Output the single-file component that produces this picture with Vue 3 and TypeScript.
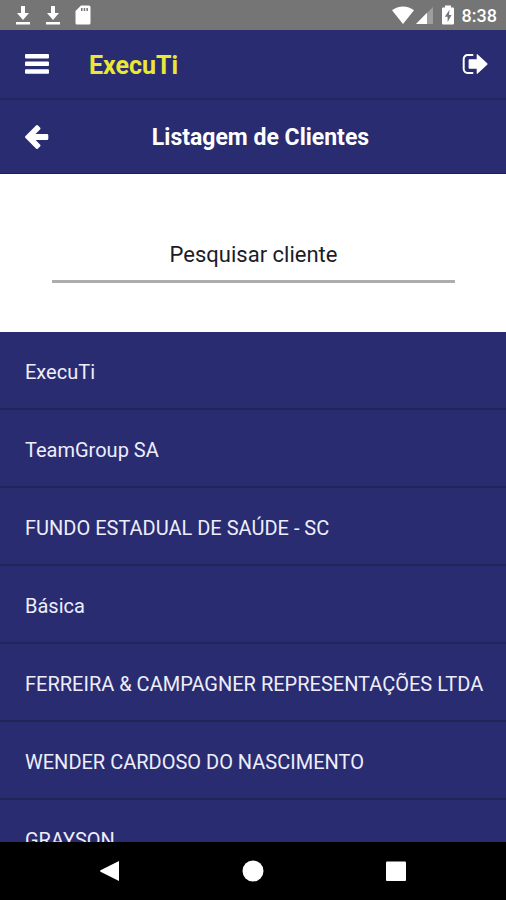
<script setup lang="ts">
import { computed, ref } from 'vue'

interface Client {
  id: number
  name: string
}

const clients: Client[] = [
  { id: 1, name: 'ExecuTi' },
  { id: 2, name: 'TeamGroup SA' },
  { id: 3, name: 'FUNDO ESTADUAL DE SAÚDE - SC' },
  { id: 4, name: 'Básica' },
  { id: 5, name: 'FERREIRA & CAMPAGNER REPRESENTAÇÕES LTDA' },
  { id: 6, name: 'WENDER CARDOSO DO NASCIMENTO' },
  { id: 7, name: 'GRAYSON' },
]

const query = ref('')

const visibleClients = computed<Client[]>(() => {
  const term = query.value.trim().toLowerCase()
  return clients.filter((client) => client.name.toLowerCase().includes(term))
})
</script>

<template>
  <div class="screen">
    <div class="status-bar">
      <div class="status-group notices">
        <svg v-for="n in 2" :key="n" class="download" viewBox="0 0 16 20" aria-hidden="true">
          <path d="M6 1h4v7h4l-6 7-6-7h4zM1 17h14v2.500H1z" />
        </svg>
        <svg class="card" viewBox="0 0 16 20" aria-hidden="true">
          <path d="M6 0.500h8a1.500 1.500 0 0 1 1.500 1.500v16a1.500 1.500 0 0 1-1.500 1.500H2A1.500 1.500 0 0 1 .5 18V6z" />
          <path class="slots" d="M6 3h1.500v3H6zM8.700 3h1.500v3H8.700zM11.400 3h1.500v3h-1.500z" />
        </svg>
      </div>
      <div class="status-group system">
        <svg class="wifi" viewBox="0 0 24 20" aria-hidden="true">
          <path d="M12 19 1 5.200C7 .1 17 .1 23 5.200z" />
        </svg>
        <svg class="signal" viewBox="0 0 18 20" aria-hidden="true">
          <path class="faint" d="M18 2v17H1z" />
          <path d="M12 7.700V19H1z" />
        </svg>
        <svg class="battery" viewBox="0 0 12 20" aria-hidden="true">
          <path d="M3 .5h6V2.500h2a1 1 0 0 1 1 1v15a1 1 0 0 1-1 1H1a1 1 0 0 1-1-1v-15a1 1 0 0 1 1-1h2z" />
          <path class="bolt" d="M7.500 4.800 2.800 11.800h2.800v5.200l4-7H7z" />
        </svg>
        <span class="clock">8:38</span>
      </div>
    </div>

    <header class="app-bar">
      <button class="icon-button" type="button" aria-label="Menu">
        <svg class="icon" viewBox="0 0 24 24" aria-hidden="true">
          <rect y="2" width="24" height="4.500" rx="1" />
          <rect y="9.600" width="24" height="4.500" rx="1" />
          <rect y="17.200" width="24" height="4.500" rx="1" />
        </svg>
      </button>
      <span class="brand">ExecuTi</span>
      <button class="icon-button exit" type="button" aria-label="Sair">
        <svg class="icon-wide" viewBox="0 0 26 24" aria-hidden="true">
          <path class="bracket" d="M10.500 3.100H5.500A3.800 3.800 0 0 0 1.700 6.900v10.200a3.800 3.800 0 0 0 3.800 3.800h5" />
          <path d="M7.500 7.300h7.200V2.800q0-1.300 1-.4l9.500 8.800q.8.800 0 1.600l-9.500 8.800q-1 .9-1-.4v-4.500H7.500q-.9 0-.9-.9V8.200q0-.9.900-.9z" />
        </svg>
      </button>
    </header>

    <div class="title-bar">
      <button class="icon-button" type="button" aria-label="Voltar">
        <svg class="icon" viewBox="0 0 24 24" aria-hidden="true">
          <path d="M.5 11 11 .6q1-1 2 0l2 1.900q1 1 0 2L10.600 9H22q1.300 0 1.300 1.300v3.400Q23.300 15 22 15H10.600l4.400 4.500q1 1 0 2l-2 1.900q-1 1-2 0L.5 13q-1-1 0-2z" />
        </svg>
      </button>
      <h1 class="title">Listagem de Clientes</h1>
    </div>

    <form class="search" role="search" @submit.prevent>
      <input
        v-model="query"
        class="search-input"
        type="text"
        aria-label="Pesquisar cliente"
        placeholder="Pesquisar cliente"
      />
    </form>

    <ul class="clients">
      <li v-for="client in visibleClients" :key="client.id">
        <button class="client" type="button">{{ client.name }}</button>
      </li>
    </ul>

    <nav class="system-nav">
      <button class="nav-button" type="button" aria-label="Anterior">
        <svg class="nav-icon" viewBox="0 0 22 22" aria-hidden="true">
          <path d="M20 1v20L1.500 11.800q-1-.8 0-1.600z" />
        </svg>
      </button>
      <button class="nav-button" type="button" aria-label="Início">
        <svg class="nav-icon" viewBox="0 0 22 22" aria-hidden="true">
          <circle cx="11" cy="11" r="10.500" />
        </svg>
      </button>
      <button class="nav-button" type="button" aria-label="Recentes">
        <svg class="nav-icon" viewBox="0 0 22 22" aria-hidden="true">
          <rect x="1" y="1.500" width="20" height="19.500" rx="1" />
        </svg>
      </button>
    </nav>
  </div>
</template>

<style>
body {
  margin: 0;
}
</style>

<style scoped>
.screen {
  display: flex;
  flex-direction: column;
  height: 100vh;
  overflow: hidden;
  background: #2a2c72;
  color: #fff;
  font-family: Roboto, "Liberation Sans", sans-serif;
}

button {
  margin: 0;
  padding: 0;
  border: 0;
  background: none;
  color: inherit;
  font: inherit;
}

svg {
  display: block;
  fill: #fff;
}

.status-bar {
  display: flex;
  flex: none;
  align-items: center;
  justify-content: space-between;
  box-sizing: border-box;
  height: 30px;
  padding: 0 9px 0 15px;
  background: #757575;
}

.status-group {
  display: flex;
  align-items: center;
}

.notices {
  gap: 14px;
}

.download,
.card {
  width: 16px;
  height: 20px;
}

.slots,
.bolt {
  fill: #757575;
}

.wifi {
  width: 24px;
  height: 20px;
}

.signal {
  width: 18px;
  height: 20px;
}

.faint {
  opacity: 0.3;
}

.battery {
  width: 12px;
  height: 20px;
  margin-left: 9px;
}

.clock {
  margin-left: 8px;
  padding-top: 2px;
  font-size: 18px;
  font-weight: 500;
  line-height: 28px;
}

.app-bar,
.title-bar {
  display: flex;
  flex: none;
  align-items: center;
  box-sizing: border-box;
  padding: 0 18px 0 25px;
}

.app-bar {
  height: 70px;
  border-bottom: 2px solid #232561;
}

.title-bar {
  height: 74px;
  border-bottom: 1px solid #1b1b68;
}

.icon-button {
  flex: none;
}

.icon {
  width: 24px;
  height: 24px;
}

.icon-wide {
  width: 26px;
  height: 24px;
}

.bracket {
  fill: none;
  stroke: #fff;
  stroke-width: 2;
  stroke-linecap: round;
}

.brand {
  margin-left: 40px;
  padding-top: 2px;
  color: #ebe834;
  font-size: 25px;
  font-weight: 700;
}

.exit {
  margin-left: auto;
}

.title {
  flex: 1;
  margin: 0 16px 0 0;
  padding-top: 2px;
  font-size: 23px;
  font-weight: 700;
  text-align: center;
}

.search {
  flex: none;
  box-sizing: border-box;
  height: 158px;
  padding: 52px 51px 0 52px;
  background: #fff;
}

.search-input {
  display: block;
  box-sizing: border-box;
  width: 100%;
  height: 57px;
  padding: 2px 0 0;
  border: 0;
  border-bottom: 3px solid #adadad;
  border-radius: 0;
  outline: 0;
  background: transparent;
  color: #1c1c28;
  font-family: inherit;
  font-size: 22px;
  text-align: center;
}

.search-input::placeholder {
  color: #1c1c28;
  opacity: 1;
}

.clients {
  flex: 1;
  min-height: 0;
  margin: 0;
  padding: 0;
  overflow: hidden;
  list-style: none;
}

.client {
  display: block;
  box-sizing: border-box;
  width: 100%;
  height: 78px;
  padding: 4px 25px 0;
  border-bottom: 2px solid #22245a;
  color: #eeeefa;
  font-size: 20px;
  text-align: left;
  white-space: nowrap;
}

.system-nav {
  display: flex;
  flex: none;
  align-items: center;
  justify-content: center;
  gap: 121px;
  height: 58px;
  background: #000;
}

.nav-icon {
  width: 22px;
  height: 22px;
}
</style>
